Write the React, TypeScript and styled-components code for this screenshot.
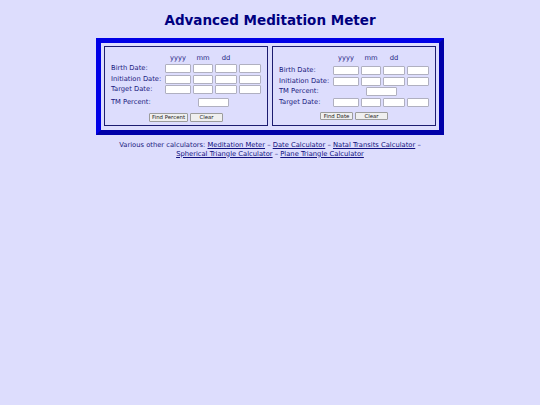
import React from "react";
import styled, { createGlobalStyle } from "styled-components";

const GlobalStyle = createGlobalStyle`
  html, body {
    margin: 0;
    padding: 0;
    background: #ddddfd;
  }
  body {
    font-family: "DejaVu Sans", Verdana, sans-serif;
    color: #000080;
  }
`;

const Page = styled.div`
  display: flex;
  flex-direction: column;
  align-items: center;
  padding-top: 12px;
  min-height: 405px;
  box-sizing: border-box;
`;

const Title = styled.h1`
  margin: 0;
  font-size: 13.5px;
  line-height: 16px;
  font-weight: bold;
  color: #000080;
`;

const Frame = styled.div`
  margin-top: 10px;
  display: flex;
  gap: 4px;
  padding: 3px 3px 4px;
  border: 5px solid;
  border-color: #0000e6 #0000a8 #0000a8 #0000e6;
`;

const Panel = styled.form`
  width: 164px;
  height: 80px;
  box-sizing: border-box;
  border: 1px solid #1c1c70;
  padding: 6.5px 6px 0;
  margin: 0;
  display: flex;
  flex-direction: column;
`;

const Row = styled.div<{ $top: number }>`
  display: grid;
  grid-template-columns: 52px 26px 20px 22px 22px;
  column-gap: 2px;
  align-items: center;
  height: 9px;
  margin-top: ${(p) => p.$top}px;
`;

const HeadRow = styled(Row)`
  height: 8px;
`;

const ColHead = styled.span`
  font-size: 6.75px;
  line-height: 8px;
  text-align: center;
  color: #1a1a80;
`;

const Label = styled.label`
  font-size: 6.75px;
  line-height: 9px;
  white-space: nowrap;
  color: #1a1a80;
`;

const Field = styled.input`
  box-sizing: border-box;
  width: 100%;
  height: 9px;
  padding: 0;
  margin: 0;
  border: 1px solid #b0b0c0;
  border-radius: 1px;
  background: #ffffff;
  font-size: 6px;
`;

const PercentField = styled(Field)`
  grid-column: 2 / span 4;
  justify-self: center;
  width: 31px;
`;

const Buttons = styled.div<{ $top: number }>`
  display: flex;
  justify-content: center;
  gap: 2px;
  margin-top: ${(p) => p.$top}px;
`;

const Button = styled.button`
  box-sizing: border-box;
  height: 8.5px;
  min-width: 33px;
  padding: 0 2px;
  margin: 0;
  border: 1px solid #9c9c9c;
  border-radius: 1px;
  background: #efefef;
  color: #222222;
  font-family: "DejaVu Sans", Verdana, sans-serif;
  font-size: 5.4px;
  line-height: 6px;
  white-space: nowrap;
`;

const Footer = styled.p`
  margin: 5.5px 0 0;
  width: 320px;
  text-align: center;
  font-size: 6.75px;
  line-height: 9px;
  color: #1a1a80;
`;

const Link = styled.a`
  color: #10107e;
  text-decoration: underline;
`;

function DateRow({ label, top }: { label: string; top: number }) {
  return (
    <Row $top={top}>
      <Label>{label}</Label>
      <Field />
      <Field />
      <Field />
      <Field />
    </Row>
  );
}

function PercentRow({ top }: { top: number }) {
  return (
    <Row $top={top}>
      <Label>TM Percent:</Label>
      <PercentField />
    </Row>
  );
}

function Heads() {
  return (
    <HeadRow $top={0}>
      <span />
      <ColHead>yyyy</ColHead>
      <ColHead>mm</ColHead>
      <ColHead>dd</ColHead>
      <span />
    </HeadRow>
  );
}

export default function App() {
  return (
    <>
      <GlobalStyle />
      <Page>
        <Title>Advanced Meditation Meter</Title>
        <Frame>
          <Panel onSubmit={(e) => e.preventDefault()}>
            <Heads />
            <DateRow label="Birth Date:" top={2.5} />
            <DateRow label="Initiation Date:" top={1.5} />
            <DateRow label="Target Date:" top={1.5} />
            <PercentRow top={4} />
            <Buttons $top={6}>
              <Button type="button">Find Percent</Button>
              <Button type="reset">Clear</Button>
            </Buttons>
          </Panel>
          <Panel onSubmit={(e) => e.preventDefault()}>
            <Heads />
            <DateRow label="Birth Date:" top={4.5} />
            <DateRow label="Initiation Date:" top={1.67} />
            <PercentRow top={1.67} />
            <DateRow label="Target Date:" top={1.67} />
            <Buttons $top={5}>
              <Button type="button">Find Date</Button>
              <Button type="reset">Clear</Button>
            </Buttons>
          </Panel>
        </Frame>
        <Footer>
          Various other calculators: <Link href="#">Meditation Meter</Link> –{" "}
          <Link href="#">Date Calculator</Link> –{" "}
          <Link href="#">Natal Transits Calculator</Link> –{" "}
          <Link href="#">Spherical Triangle Calculator</Link> –{" "}
          <Link href="#">Plane Triangle Calculator</Link>
        </Footer>
      </Page>
    </>
  );
}
